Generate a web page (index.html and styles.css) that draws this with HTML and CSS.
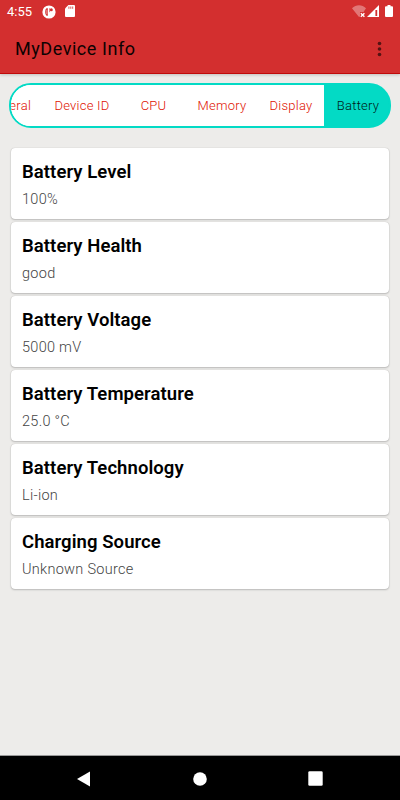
FILE: index.html
```html
<!DOCTYPE html>
<html lang="en">
<head>
    <meta charset="UTF-8">
    <meta name="viewport" content="width=device-width, initial-scale=1.0">
    <title>MyDevice Info</title>
    <link rel="stylesheet" href="styles.css">
</head>
<body>
    <div class="screen">
        <header class="header">
            <div class="status-bar">
                <span class="time">4:55</span>
                <svg class="app-icon" width="14" height="14" viewBox="0 0 14 14">
                    <circle cx="7" cy="7" r="6.6" fill="#fff"/>
                    <path d="M5.8 3.2v7.6H4.5Q3.2 10 3.2 7t1.3-3.8z" fill="#d32f2f"/>
                    <path d="M4.8 4.8v4.4" stroke="#fff" stroke-width=".5"/>
                    <path d="M7.6 3.2v4" stroke="#d32f2f" stroke-width=".6"/>
                    <circle cx="9.3" cy="4.7" r="1.5" fill="#d32f2f"/>
                </svg>
                <svg class="sd-icon" width="10" height="12" viewBox="0 0 10 12">
                    <path d="M3.4 0H9a1 1 0 0 1 1 1v10a1 1 0 0 1-1 1H1a1 1 0 0 1-1-1V3.4z" fill="#fff"/>
                    <path d="M3.9 1.5v2.3M5.8 1.5v2.3M7.7 1.5v2.3" stroke="#d32f2f" stroke-width=".8"/>
                </svg>
                <div class="status-right">
                    <svg width="14" height="13" viewBox="0 0 14 13">
                        <path d="M0 3.2C4-.8 10-.8 14 3.2L11.5 7H8v4.4L7 12z" fill="#fff" opacity=".35"/>
                        <path d="M8.8 8.2l3.6 3.6M12.4 8.2l-3.6 3.6" stroke="#fff" stroke-width="1.4"/>
                    </svg>
                    <svg width="12" height="12" viewBox="0 0 12 12">
                        <path d="M12 0v12H0z" fill="#fff"/>
                        <path d="M8.4 5h1.8v6H8.4z" fill="#d32f2f"/>
                    </svg>
                    <svg class="battery-icon" width="8" height="12" viewBox="0 0 8 12">
                        <path d="M2.5 0h3v1.2H7a1 1 0 0 1 1 1V11a1 1 0 0 1-1 1H1a1 1 0 0 1-1-1V2.2a1 1 0 0 1 1-1h1.5z" fill="#fff"/>
                    </svg>
                </div>
            </div>
            <div class="toolbar">
                <h1>MyDevice Info</h1>
                <svg width="5" height="16" viewBox="0 0 5 16" fill="#541313">
                    <circle cx="2.5" cy="2.5" r="1.8"/>
                    <circle cx="2.5" cy="8" r="1.8"/>
                    <circle cx="2.5" cy="13.5" r="1.8"/>
                </svg>
            </div>
        </header>

        <nav class="tabs">
            <div class="tab tab-general">General</div>
            <div class="tab tab-device">Device ID</div>
            <div class="tab tab-cpu">CPU</div>
            <div class="tab tab-memory">Memory</div>
            <div class="tab">Display</div>
            <div class="tab active">Battery</div>
        </nav>

        <main class="cards">
            <div class="card">
                <h2>Battery Level</h2>
                <p>100%</p>
            </div>
            <div class="card">
                <h2>Battery Health</h2>
                <p>good</p>
            </div>
            <div class="card">
                <h2>Battery Voltage</h2>
                <p>5000 mV</p>
            </div>
            <div class="card">
                <h2>Battery Temperature</h2>
                <p>25.0 °C</p>
            </div>
            <div class="card">
                <h2>Battery Technology</h2>
                <p>Li-ion</p>
            </div>
            <div class="card">
                <h2>Charging Source</h2>
                <p>Unknown Source</p>
            </div>
        </main>

        <footer class="nav-bar">
            <svg width="14" height="16" viewBox="0 0 14 16" fill="#fff">
                <path d="M13 .5v15L0 8z"/>
            </svg>
            <svg width="14" height="14" viewBox="0 0 14 14" fill="#fff">
                <circle cx="7" cy="7" r="6.8"/>
            </svg>
            <svg width="15" height="15" viewBox="0 0 15 15" fill="#fff">
                <rect x=".3" y=".3" width="14.4" height="14.4" rx="1.3"/>
            </svg>
        </footer>
    </div>
</body>
</html>
```

FILE: styles.css
```css
* {
    box-sizing: border-box;
    margin: 0;
    padding: 0;
}

body {
    background-color: #edecea;
    font-family: Roboto, sans-serif;
}

.screen {
    width: 400px;
    height: 800px;
    display: flex;
    flex-direction: column;
    overflow: hidden;
}

.header {
    height: 74px;
    background-color: #d32f2f;
    border-bottom: 1px solid #c00a0a;
    box-shadow: 0 1px 3px rgba(0, 0, 0, 0.2);
}

.status-bar {
    height: 24px;
    padding: 0 7px;
    display: flex;
    align-items: center;
    color: white;
}

.time {
    width: 35px;
    font-size: 13px;
    line-height: 24px;
}

.app-icon {
    margin-top: -1px;
}

.sd-icon {
    margin-left: 9px;
    margin-top: -2px;
}

.status-right {
    margin-left: auto;
    margin-top: -2px;
    display: flex;
    align-items: center;
    gap: 1px;
}

.battery-icon {
    margin-left: 5px;
}

.toolbar {
    height: 49px;
    padding: 0 18px 0 15px;
    display: flex;
    align-items: center;
    justify-content: space-between;
}

.toolbar h1 {
    font-size: 18px;
    font-weight: 450;
    letter-spacing: 0.55px;
    color: #0d0202;
}

/* the list is scrolled, so the first tab is cut at the rounded edge */
.tabs {
    height: 45px;
    margin: 9px 9px 0;
    display: flex;
    justify-content: flex-end;
    flex-shrink: 0;
    overflow: hidden;
    background: linear-gradient(to right, white 315px, #03dac5 315px) border-box;
    border: 2px solid #03dac5;
    border-radius: 22px;
}

.tab {
    width: 67px;
    padding-left: 1px;
    flex-shrink: 0;
    text-align: center;
    background-color: white;
    font-size: 13px;
    line-height: 42px;
    font-weight: 360;
    letter-spacing: 0.25px;
    color: #e01200;
}

.tab-general {
    width: 70px;
}

.tab-device {
    width: 77px;
}

.tab-cpu {
    width: 66px;
}

.tab-memory {
    width: 71px;
}

.tab.active {
    width: 65px;
    padding-left: 3px;
    background-color: #03dac5;
    color: #001a18;
}

.cards {
    flex: 1;
    padding: 20px 11px 0;
}

.card {
    height: 71px;
    margin-bottom: 3px;
    padding: 12px 11px;
    background-color: white;
    border-radius: 4px;
    box-shadow: 0 0 1px rgba(0, 0, 0, 0.25), 0 1px 2px rgba(0, 0, 0, 0.2);
}

.card h2 {
    font-size: 18.5px;
    line-height: 24px;
    font-weight: 600;
    letter-spacing: 0.07px;
    color: #000;
}

.card p {
    margin-top: 6px;
    font-size: 14.5px;
    line-height: 20px;
    font-weight: 300;
    letter-spacing: 0.28px;
    color: #444;
}

.nav-bar {
    height: 45px;
    padding: 1px 77px 0;
    display: flex;
    align-items: center;
    justify-content: space-between;
    background-color: black;
    border-top: 1px solid #999;
}
```
